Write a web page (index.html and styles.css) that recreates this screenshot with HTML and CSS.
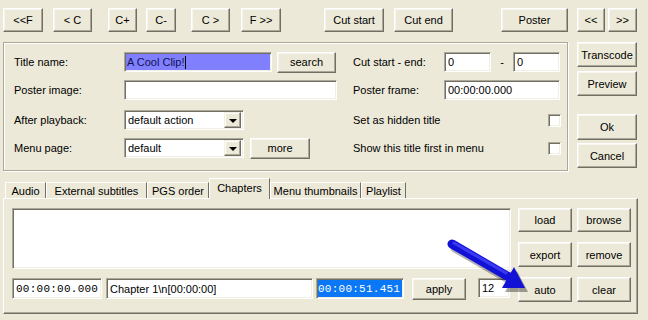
FILE: index.html
```html
<!DOCTYPE html>
<html>
<head>
<meta charset="utf-8">
<link rel="stylesheet" href="styles.css">
</head>
<body>
<div class="toolbar">
  <button class="btn t1">&lt;&lt;F</button>
  <button class="btn t2">&lt; C</button>
  <button class="btn t3">C+</button>
  <button class="btn t4">C-</button>
  <button class="btn t5">C &gt;</button>
  <button class="btn t6">F &gt;&gt;</button>
  <button class="btn t7">Cut start</button>
  <button class="btn t8">Cut end</button>
  <button class="btn t9">Poster</button>
  <button class="btn t10">&lt;&lt;</button>
  <button class="btn t11">&gt;&gt;</button>
</div>

<div class="main">
  <div class="panel">
    <div class="lbl">Title name:</div>
    <div class="cell">
      <div class="field sel w148">A Cool Clip!<span class="caret"></span></div>
      <button class="btn search">search</button>
    </div>
    <div class="lbl">Cut start - end:</div>
    <div class="cell">
      <div class="field w47">0</div>
      <div class="dash">-</div>
      <div class="field w47">0</div>
    </div>

    <div class="lbl">Poster image:</div>
    <div class="cell"><div class="field w213"></div></div>
    <div class="lbl">Poster frame:</div>
    <div class="cell"><div class="field w116">00:00:00.000</div></div>

    <div class="lbl">After playback:</div>
    <div class="cell">
      <div class="field select"><span>default action</span><span class="drop"><i class="tri"></i></span></div>
    </div>
    <div class="lbl span2"><span>Set as hidden title</span><span class="check"></span></div>

    <div class="lbl">Menu page:</div>
    <div class="cell">
      <div class="field select"><span>default</span><span class="drop"><i class="tri"></i></span></div>
      <button class="btn more">more</button>
    </div>
    <div class="lbl span2"><span>Show this title first in menu</span><span class="check"></span></div>
  </div>

  <div class="side">
    <button class="btn s1">Transcode</button>
    <button class="btn s2">Preview</button>
    <button class="btn s3">Ok</button>
    <button class="btn s4">Cancel</button>
  </div>
</div>

<div class="tabs">
  <div class="tab tab-audio">Audio</div>
  <div class="tab tab-ext">External subtitles</div>
  <div class="tab tab-pgs">PGS order</div>
  <div class="tab active tab-chap">Chapters</div>
  <div class="tab tab-menu">Menu thumbnails</div>
  <div class="tab tab-play">Playlist</div>
</div>

<div class="tabpanel">
  <div class="leftcol">
    <div class="field list"></div>
    <div class="row">
      <div class="field mono time">00:00:00.000</div>
      <div class="field chapname">Chapter 1\n[00:00:00]</div>
      <div class="field mono bluesel">00:00:51.451</div>
      <button class="btn apply">apply</button>
      <div class="field num">12</div>
    </div>
  </div>
  <div class="btngrid">
    <button class="btn g1">load</button>
    <button class="btn g1">browse</button>
    <button class="btn g2">export</button>
    <button class="btn g2">remove</button>
    <button class="btn g2">auto</button>
    <button class="btn g2">clear</button>
  </div>
</div>

<svg class="overlay" width="648" height="320" viewBox="0 0 648 320">
  <g fill="rgba(0,0,0,0.35)" stroke="none">
    <line x1="455" y1="248" x2="512" y2="281" stroke="rgba(0,0,0,0.3)" stroke-width="9" stroke-linecap="round"/>
    <polygon points="517,271 505,292 528,292"/>
  </g>
  <line x1="452" y1="244" x2="509" y2="277" stroke="#1212d6" stroke-width="9" stroke-linecap="round"/>
  <polygon points="514,267 502,288 525,288" fill="#1212d6"/>
  <line x1="454" y1="243" x2="506" y2="273" stroke="#3a3af2" stroke-width="3" stroke-linecap="round"/>
</svg>
</body>
</html>
```
FILE: styles.css
```css
* { box-sizing: border-box; }

body {
  margin: 0;
  width: 648px;
  height: 320px;
  overflow: hidden;
  position: relative;
  background: #ece9d8;
  font: 11px "Liberation Sans", Arial, sans-serif;
  color: #000;
}

.btn {
  display: flex;
  align-items: center;
  justify-content: center;
  height: 24px;
  padding: 0;
  background: #ece9d8;
  border: 1px solid;
  border-color: #fff #716f64 #716f64 #fff;
  box-shadow: inset -1px -1px 0 #aca899, inset 1px 1px 0 #f6f5ef;
  font: inherit;
  color: #000;
  white-space: nowrap;
}

.field {
  display: flex;
  align-items: center;
  height: 20px;
  padding: 0 3px;
  background: #fff;
  border: 1px solid;
  border-color: #aca899 #fff #fff #aca899;
  box-shadow: inset 1px 1px 0 #716f64, inset -1px -1px 0 #f1efe2;
  white-space: nowrap;
  overflow: hidden;
}

/* toolbar */
.toolbar { display: flex; height: 32px; padding: 8px 0 0 3px; }
.t1 { width: 40px; }
.t2 { width: 39px; margin-left: 10px; }
.t3 { width: 29px; margin-left: 16px; }
.t4 { width: 30px; margin-left: 9px; }
.t5 { width: 39px; margin-left: 15px; }
.t6 { width: 40px; margin-left: 11px; }
.t7 { width: 60px; margin-left: 43px; }
.t8 { width: 59px; margin-left: 10px; }
.t9 { width: 67px; margin-left: 48px; }
.t10 { width: 28px; margin-left: 9px; }
.t11 { width: 29px; margin-left: 3px; }

/* main */
.main { display: flex; margin-top: 10px; height: 129px; }
.panel {
  margin-left: 3px;
  width: 565px;
  height: 129px;
  border: 1px solid #aca899;
  box-shadow: inset 1px 1px 0 #fff, 1px 1px 0 #fff;
  padding: 8px 0 0 10px;
  display: grid;
  grid-template-columns: 110px 229px 91px 116px;
  grid-template-rows: 28px 30px 28px 22px;
  align-items: start;
}
.lbl { height: 22px; display: flex; align-items: center; }
.cell { height: 22px; display: flex; align-items: center; }
.span2 { grid-column: span 2; justify-content: space-between; }

.w148 { width: 148px; }
.w47 { width: 47px; }
.w213 { width: 213px; }
.w116 { width: 116px; }
.sel { background: #8080ff; color: #101050; padding-left: 2px; }
.caret { display: inline-block; width: 1px; height: 13px; background: #000; margin-left: 1px; }
.search { width: 59px; height: 21px; margin-left: 5px; }
.dash { flex: 1; text-align: center; }
.more { width: 60px; height: 21px; margin-left: 6px; }

.select { width: 120px; padding: 0 2px 0 3px; justify-content: space-between; }
.drop {
  width: 17px;
  height: 16px;
  display: flex;
  align-items: center;
  justify-content: center;
  background: #ece9d8;
  border: 1px solid;
  border-color: #f1efe2 #716f64 #716f64 #f1efe2;
  box-shadow: inset -1px -1px 0 #aca899, inset 1px 1px 0 #fff;
}
.tri {
  width: 0;
  height: 0;
  border-left: 4px solid transparent;
  border-right: 4px solid transparent;
  border-top: 4px solid #000;
  margin-top: 1px;
}
.check {
  width: 13px;
  height: 13px;
  background: #fff;
  border: 1px solid;
  border-color: #aca899 #fff #fff #aca899;
  box-shadow: inset 1px 1px 0 #716f64, inset -1px -1px 0 #f1efe2;
  margin-right: -1px;
}

.side { margin-left: 9px; width: 60px; display: flex; flex-direction: column; }
.side .btn { width: 60px; }
.s1 { height: 25px; }
.s2 { height: 25px; margin-top: 4px; }
.s3 { height: 26px; margin-top: 18px; }
.s4 { height: 25px; margin-top: 3px; }

/* tabs */
.tabs { display: flex; align-items: flex-end; height: 20px; margin-top: 7px; padding-left: 5px; }
.tab {
  height: 16px;
  display: flex;
  align-items: center;
  justify-content: center;
  border-top: 1px solid #fff;
  border-left: 1px solid #fff;
  border-right: 1px solid #716f64;
  white-space: nowrap;
}
.tab.active {
  height: 21px;
  margin-bottom: -1px;
  position: relative;
  z-index: 1;
  background: #ece9d8;
  padding-bottom: 2px;
}
.tab-audio { width: 41px; }
.tab-ext { width: 101px; }
.tab-pgs { width: 62px; }
.tab-chap { width: 61px; }
.tab-menu { width: 91px; }
.tab-play { width: 45px; }

.tabpanel {
  margin-left: 3px;
  width: 635px;
  height: 116px;
  border: 1px solid;
  border-color: #fff #716f64 #716f64 #fff;
  box-shadow: inset -1px -1px 0 #aca899;
  padding: 9px 0 0 8px;
  display: flex;
}
.leftcol { width: 499px; }
.list { height: 61px; width: 499px; }
.row { display: flex; align-items: flex-start; margin-top: 9px; }
.mono { font-family: "Liberation Mono", "DejaVu Sans Mono", monospace; letter-spacing: 0.25px; }
.time { width: 90px; height: 21px; }
.chapname { width: 207px; height: 21px; margin-left: 4px; }
.bluesel { width: 88px; height: 21px; margin-left: 3px; background: #0a78f6; color: #fff; padding-left: 1px; }
.apply { width: 54px; height: 22px; margin-left: 8px; }
.num { width: 32px; height: 20px; margin-left: 12px; }

.btngrid {
  margin-left: 7px;
  display: grid;
  grid-template-columns: 54px 54px;
  grid-template-rows: 24px 25px 25px;
  column-gap: 5px;
  row-gap: 10px;
}
.btngrid .btn { height: 100%; }

.overlay { position: absolute; left: 0; top: 0; pointer-events: none; }
```
